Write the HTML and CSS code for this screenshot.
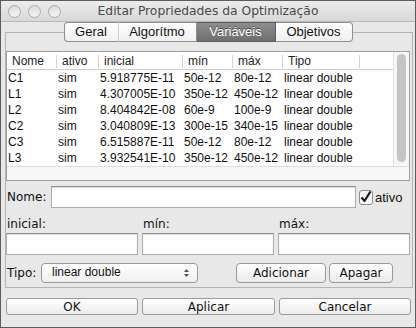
FILE: index.html
```html
<!DOCTYPE html>
<html lang="pt">

<head>
    <meta charset="UTF-8">
    <title>Editar Propriedades da Optimização</title>
    <link rel="stylesheet" href="styles.css">
</head>

<body>
    <div class="window">
        <div class="titlebar">
            <div class="lights">
                <span class="light"></span>
                <span class="light"></span>
                <span class="light"></span>
            </div>
            <div class="title">Editar Propriedades da Optimização</div>
        </div>

        <div class="tabs">
            <div class="tab tab-geral">Geral</div>
            <div class="tab tab-alg">Algorítmo</div>
            <div class="tab tab-var active">Variáveis</div>
            <div class="tab tab-obj">Objetivos</div>
        </div>

        <div class="pane">
            <div class="table">
                <div class="table-main">
                    <div class="list">
                        <div class="row head">
                            <span>Nome</span><span>ativo</span><span>inicial</span><span>mín</span><span>máx</span><span>Tipo</span><span class="last"></span>
                        </div>
                        <div class="row"><span>C1</span><span>sim</span><span>5.918775E-11</span><span>50e-12</span><span>80e-12</span><span>linear double</span><span></span></div>
                        <div class="row"><span>L1</span><span>sim</span><span>4.307005E-10</span><span>350e-12</span><span>450e-12</span><span>linear double</span><span></span></div>
                        <div class="row"><span>L2</span><span>sim</span><span>8.404842E-08</span><span>60e-9</span><span>100e-9</span><span>linear double</span><span></span></div>
                        <div class="row"><span>C2</span><span>sim</span><span>3.040809E-13</span><span>300e-15</span><span>340e-15</span><span>linear double</span><span></span></div>
                        <div class="row"><span>C3</span><span>sim</span><span>6.515887E-11</span><span>50e-12</span><span>80e-12</span><span>linear double</span><span></span></div>
                        <div class="row"><span>L3</span><span>sim</span><span>3.932541E-10</span><span>350e-12</span><span>450e-12</span><span>linear double</span><span></span></div>
                    </div>
                    <div class="vscroll"><div class="thumb"></div></div>
                </div>
                <div class="hscroll"></div>
            </div>

            <div class="name-row">
                <label class="label name-label">Nome:</label>
                <input class="field name-field" type="text">
                <span class="check">
                    <svg width="12" height="12" viewBox="0 0 12 12">
                        <path d="M1.5 6.5 L4.5 10 L10.5 0.5" fill="none" stroke="#1a1a1a" stroke-width="2.2" stroke-linejoin="round"/>
                    </svg>
                </span>
                <span class="check-text">ativo</span>
            </div>

            <div class="labels">
                <span class="label">inicial:</span>
                <span class="label">mín:</span>
                <span class="label">máx:</span>
            </div>
            <div class="inputs">
                <input class="field" type="text">
                <input class="field" type="text">
                <input class="field" type="text">
            </div>

            <div class="type-row">
                <span class="label">Tipo:</span>
                <div class="select">
                    <span>linear double</span>
                    <svg width="7" height="10" viewBox="0 0 7 10">
                        <path d="M1 4 L3.5 1 L6 4 Z M1 6 L3.5 9 L6 6 Z" fill="#555"/>
                    </svg>
                </div>
                <div class="spacer"></div>
                <button class="btn btn-add">Adicionar</button>
                <button class="btn btn-del">Apagar</button>
            </div>
        </div>

        <div class="actions">
            <button class="btn small">OK</button>
            <button class="btn small">Aplicar</button>
            <button class="btn small">Cancelar</button>
        </div>
    </div>
</body>

</html>
```

FILE: styles.css
```css
* {
    margin: 0;
    padding: 0;
    box-sizing: border-box;
}

body {
    background-color: #e8e8e8;
    font-family: "DejaVu Sans", sans-serif;
    font-size: 12px;
    color: #111;
}

.window {
    width: 416px;
    height: 328px;
    border: 1px solid #5c5c5c;
    background-color: #e8e8e8;
}

/* barra de titulo */
.titlebar {
    display: grid;
    grid-template-columns: 1fr auto 1fr;
    align-items: center;
    height: 21px;
    border-bottom: 1px solid #b9b9b9;
    background: linear-gradient(#ececec, #d8d8d8);
}

.lights {
    display: flex;
    gap: 7px;
    padding-left: 7px;
}

.light {
    width: 13px;
    height: 13px;
    border-radius: 50%;
    border: 1px solid #a9a9a9;
    background: linear-gradient(#dcdcdc, #f4f4f4);
}

.title {
    font-size: 12.3px;
    color: #4a4a4a;
}

/* abas */
.tabs {
    position: relative;
    z-index: 1;
    display: flex;
    justify-content: center;
    height: 20px;
}

.tab {
    height: 20px;
    line-height: 18px;
    text-align: center;
    font-family: "Liberation Sans", Arial, sans-serif;
    font-size: 13px;
    color: #111;
    border: 1px solid #8e8e8e;
    border-left: none;
    background: linear-gradient(#ffffff, #f0f0f0);
}

.tab-geral {
    width: 55px;
    border-left: 1px solid #8e8e8e;
    border-radius: 4px 0 0 4px;
    border-right-color: #d0d0d0;
}

.tab-alg {
    width: 78px;
}

.tab-var {
    width: 79px;
}

.tab-obj {
    width: 77px;
    border-radius: 0 4px 4px 0;
}

.tab.active {
    color: #fff;
    background: linear-gradient(#8d8d8d, #6f6f6f);
    border-color: #5e5e5e;
    text-shadow: 0 -1px 0 #4c4c4c;
}

.pane {
    width: 408px;
    margin: -10px 2px 0 4px;
    padding: 18px 2px 4px 0;
    border: 1px solid #b4b4b4;
}

/* tabela */
.table {
    height: 130px;
    border: 1px solid #9d9d9d;
    background-color: #fff;
}

.table-main {
    display: flex;
    height: 114px;
}

.list {
    flex: 1;
    overflow: hidden;
}

.row {
    display: grid;
    grid-template-columns: 50px 42px 84px 50px 50px 77px 1fr;
    height: 16px;
    line-height: 16px;
    font-family: "Liberation Sans", Arial, sans-serif;
    font-size: 12px;
    white-space: nowrap;
}

.row span {
    padding-left: 1px;
}

.row.head {
    height: 18px;
    line-height: 17px;
    border-bottom: 1px solid #cfcfcf;
    color: #222;
}

.row.head span {
    padding-left: 5px;
    border-right: 1px solid #d4d4d4;
    height: 13px;
    line-height: 13px;
    margin-top: 3px;
}

.row.head span.last {
    border-right: none;
}

.vscroll {
    width: 16px;
    padding: 2px 3px 2px 3px;
    border-left: 1px solid #e3e3e3;
    background-color: #f6f6f6;
}

.thumb {
    height: 108px;
    border-radius: 5px;
    background-color: #c4c4c4;
}

.hscroll {
    height: 14px;
    border-top: 1px solid #dedede;
    background-color: #f6f6f6;
}

/* campos */
.label {
    font-size: 12px;
    color: #111;
    padding-left: 1px;
}

.field {
    height: 22px;
    min-width: 0;
    border: 1px solid #acacac;
    border-top-color: #8f8f8f;
    background-color: #fff;
    box-shadow: inset 0 1px 1px #dcdcdc;
    outline: none;
}

.name-row {
    display: flex;
    align-items: center;
    height: 22px;
    margin-top: 5px;
}

.name-label {
    width: 45px;
}

.name-field {
    width: 305px;
}

.check {
    display: flex;
    align-items: center;
    justify-content: center;
    width: 14px;
    height: 15px;
    margin-left: 3px;
    border: 1px solid #8c8c8c;
    border-radius: 3px;
    background: linear-gradient(#f4f4f4, #ffffff);
}

.check-text {
    margin-left: 2px;
    font-family: "Liberation Sans", Arial, sans-serif;
    font-size: 13px;
}

.labels,
.inputs {
    display: grid;
    grid-template-columns: repeat(3, minmax(0, 1fr));
    column-gap: 4px;
}

.labels {
    height: 16px;
    margin-top: 8px;
    line-height: 16px;
}

.inputs {
    margin-top: 1px;
}

.inputs .field {
    width: 100%;
}

.type-row {
    display: flex;
    align-items: center;
    height: 20px;
    margin-top: 8px;
}

.type-row .label {
    width: 35px;
}

.select {
    display: flex;
    align-items: center;
    justify-content: space-between;
    width: 157px;
    height: 20px;
    padding: 0 7px 3px 10px;
    border: 1px solid #9a9a9a;
    border-radius: 4px;
    background: linear-gradient(#ffffff, #f0f0f0);
    font-family: "Liberation Sans", Arial, sans-serif;
    font-size: 12px;
}

.select svg {
    margin-top: 3px;
}

.spacer {
    flex: 1;
}

.btn {
    height: 20px;
    border: 1px solid #9a9a9a;
    border-radius: 4px;
    background: linear-gradient(#ffffff, #ececec);
    font-family: "DejaVu Sans", sans-serif;
    font-size: 12px;
    color: #111;
}

.btn-add {
    width: 90px;
}

.btn-del {
    width: 64px;
    margin: 0 17px 0 3px;
}

.actions {
    display: grid;
    grid-template-columns: 132px 133px 132px;
    column-gap: 4px;
    margin: 10px 0 0 5px;
}

.btn.small {
    height: 17px;
    line-height: 14px;
    border-radius: 3px;
}
```
